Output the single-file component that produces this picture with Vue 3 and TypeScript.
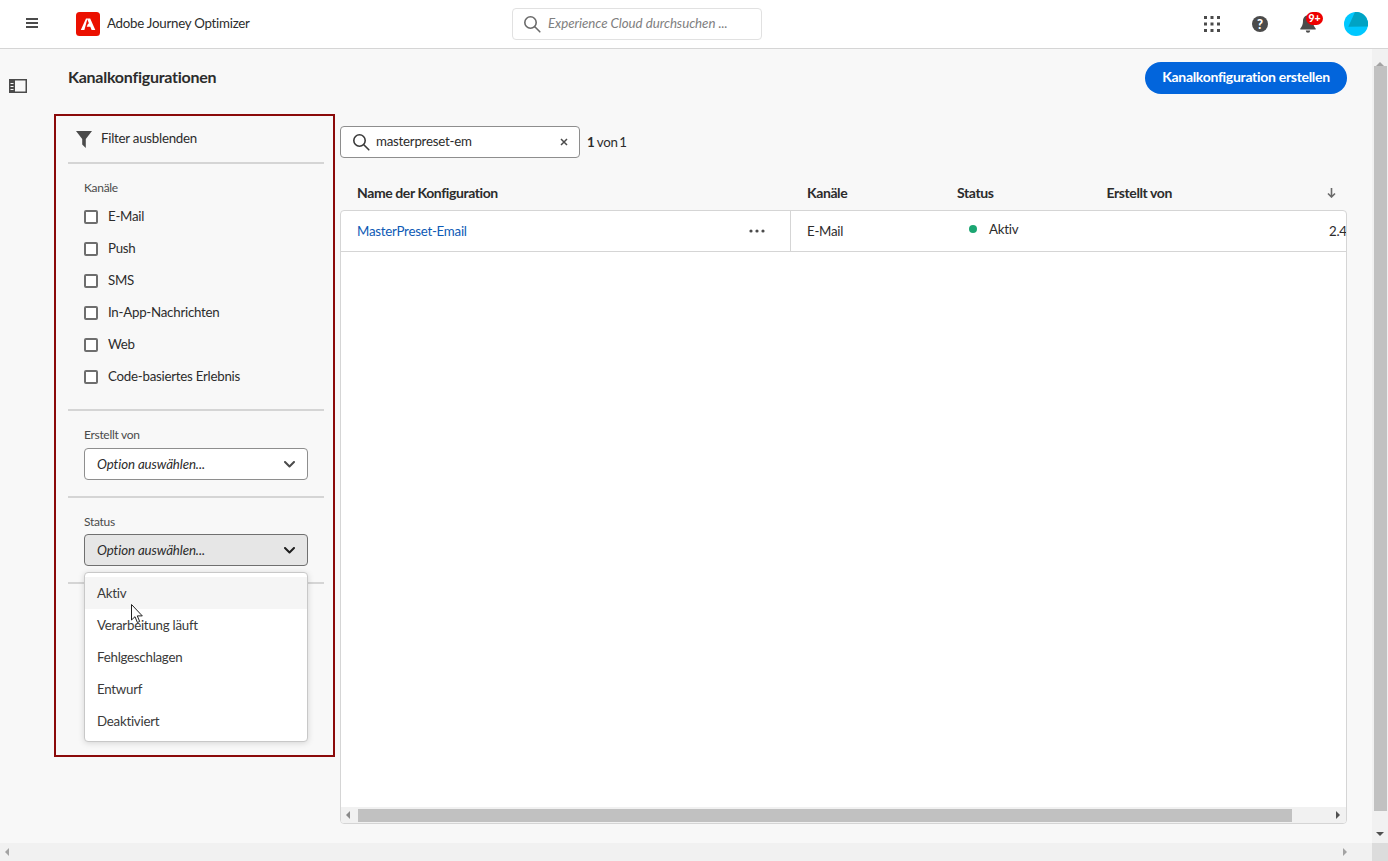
<script setup lang="ts">
const channels: string[] = ['E-Mail', 'Push', 'SMS', 'In-App-Nachrichten', 'Web', 'Code-basiertes Erlebnis']
const statuses: string[] = ['Aktiv', 'Verarbeitung läuft', 'Fehlgeschlagen', 'Entwurf', 'Deaktiviert']
</script>

<template>
  <div class="app">
    <header class="topbar">
      <svg class="burger" width="12" height="10" viewBox="0 0 12 10"><path d="M0 0h12v2H0zM0 4h12v2H0zM0 8h12v2H0z" fill="#4b4b4b" /></svg>
      <span class="logo">
        <svg width="24" height="24" viewBox="0 0 24 24"><rect width="24" height="24" rx="3.5" fill="#eb1000" /><path d="M10 6.500h4.200L19.300 18h-3.700l-1.300-3.300h-3.600l1.400-3.100 1 .1-1.800-4.400L8.400 18H4.800z" fill="#fff" /></svg>
      </span>
      <span class="product">Adobe Journey Optimizer</span>
      <div class="global-search">
        <svg width="18" height="18" viewBox="0 0 18 18" fill="none" stroke="#6a6a6a" stroke-width="1.6"><circle cx="7.5" cy="7.5" r="5.7" /><path d="M11.8 11.8l5 5" stroke-linecap="round" /></svg>
        <span>Experience Cloud durchsuchen ...</span>
      </div>
      <div class="top-actions">
        <svg class="grid-icon" width="16" height="16" viewBox="0 0 16 16" fill="#4b4b4b"><path d="M0 0h3v3H0zM6.500 0h3v3h-3zM13 0h3v3h-3zM0 6.500h3v3H0zM6.500 6.500h3v3h-3zM13 6.500h3v3h-3zM0 13h3v3H0zM6.500 13h3v3h-3zM13 13h3v3h-3z" /></svg>
        <span class="help">?</span>
        <span class="bell">
          <svg width="16" height="18" viewBox="0 0 16 18" fill="#4b4b4b"><path d="M8 0.500c-3 0-5 2-5 5.500 0 3.500-1 5.500-2.700 7.500v1h15.400v-1C14 11.500 13 9.500 13 6c0-3.500-2-5.500-5-5.500zM5.800 15.500a2.200 2.200 0 0 0 4.400 0z" /></svg>
          <b class="badge">9+</b>
        </span>
        <svg class="avatar" width="24" height="24" viewBox="0 0 24 24"><circle cx="12" cy="12" r="12" fill="#00c8ff" /><path d="M11 0A12 12 0 0 1 23.800 14.500L4.300 14.800z" fill="#00a3c4" /></svg>
      </div>
    </header>

    <div class="middle">
      <div class="viewport">
        <aside class="rail">
          <svg width="18" height="14" viewBox="0 0 18 14"><path d="M0 0h18v14H0z" fill="#4b4b4b" /><path d="M6 1.500h10.500v11H6z" fill="#f8f8f8" /><path d="M1.500 4h3v1h-3zM1.500 7h3v1h-3zM1.500 10h3v1h-3z" fill="#f8f8f8" /></svg>
        </aside>

        <main class="content">
          <div class="title-row">
            <h1>Kanalkonfigurationen</h1>
            <button class="cta">Kanalkonfiguration erstellen</button>
          </div>

          <div class="columns">
            <section class="filters">
              <div class="filter-head">
                <svg width="16" height="17" viewBox="0 0 16 17" fill="#4b4b4b"><path d="M0 0h16L9.800 8v9L6.200 13.500V8z" /></svg>
                <span>Filter ausblenden</span>
              </div>

              <div class="group channels">
                <div class="label">Kanäle</div>
                <label v-for="c in channels" :key="c" class="check"><i></i><span>{{ c }}</span></label>
              </div>

              <div class="group by">
                <div class="label">Erstellt von</div>
                <div class="select">
                  <em>Option auswählen...</em>
                  <svg width="11" height="7" viewBox="0 0 11 7" fill="none" stroke="#4b4b4b" stroke-width="2" stroke-linecap="round" stroke-linejoin="round"><path d="M1 1l4.500 4.500L10 1" /></svg>
                </div>
              </div>

              <div class="group status">
                <div class="label">Status</div>
                <div class="select open">
                  <em>Option auswählen...</em>
                  <svg width="11" height="7" viewBox="0 0 11 7" fill="none" stroke="#1f1f1f" stroke-width="2" stroke-linecap="round" stroke-linejoin="round"><path d="M1 1l4.500 4.500L10 1" /></svg>
                </div>
              </div>

              <ul class="menu">
                <li v-for="(s, i) in statuses" :key="s" :class="{ hover: i === 0 }">{{ s }}</li>
              </ul>
              <svg class="cursor" width="13" height="20" viewBox="0 0 13 20"><path d="M0.500 0.500v15.500l3.500-3.300 2.400 5.800 2.300-1-2.400-5.600h5z" fill="#fff" stroke="#222" stroke-width="1" /></svg>
            </section>

            <section class="results">
              <div class="search-row">
                <div class="search">
                  <svg width="18" height="18" viewBox="0 0 18 18" fill="none" stroke="#3a3a3a" stroke-width="1.6"><circle cx="7.500" cy="7.500" r="5.700" /><path d="M11.800 11.800l5 5" stroke-linecap="round" /></svg>
                  <span>masterpreset-em</span>
                  <svg class="x" width="8" height="8" viewBox="0 0 8 8" stroke="#4b4b4b" stroke-width="1.500"><path d="M1 1l6 6M7 1l-6 6" /></svg>
                </div>
                <span class="count"><b>1</b> von 1</span>
              </div>

              <div class="thead">
                <span>Name der Konfiguration</span>
                <span>Kanäle</span>
                <span>Status</span>
                <span>Erstellt von</span>
                <svg width="9" height="10" viewBox="0 0 9 10" fill="none" stroke="#6a6a6a" stroke-width="1.600"><path d="M4.500 0v9M1 5.500l3.500 3.500L8 5.500" /></svg>
              </div>

              <div class="table">
                <div class="trow">
                  <div class="cell name">
                    <a>MasterPreset-Email</a>
                    <svg width="16" height="4" viewBox="0 0 16 4" fill="#4b4b4b"><circle cx="2" cy="2" r="1.600" /><circle cx="8" cy="2" r="1.600" /><circle cx="14" cy="2" r="1.600" /></svg>
                  </div>
                  <div class="cell chan">E-Mail</div>
                  <div class="cell stat"><i></i>Aktiv</div>
                  <div class="cell by-cell"></div>
                  <div class="cell date">2.4</div>
                </div>
                <div class="tbody"></div>
                <div class="h-bar">
                  <span class="arrow left"></span>
                  <span class="thumb"></span>
                  <span class="arrow right"></span>
                </div>
              </div>
            </section>
          </div>
        </main>
      </div>

      <div class="v-bar">
        <span class="v-up"></span>
        <span class="v-thumb"></span>
        <span class="v-down"></span>
      </div>
    </div>

    <div class="page-h">
      <span class="arrow left faint"></span>
      <span class="arrow right faint"></span>
      <span class="corner"></span>
    </div>
  </div>
</template>

<style>
html, body { margin: 0; background: #f8f8f8; }
</style>

<style scoped>
.app { width: 1388px; height: 861px; display: flex; flex-direction: column; overflow: hidden; font-family: Lato, "Noto Sans", sans-serif; font-size: 13.3px; letter-spacing: -0.25px; color: #2c2c2c; background: #f8f8f8; }
.topbar { height: 48px; flex: none; box-sizing: content-box; background: #fff; border-bottom: 1px solid #d5d5d5; display: flex; align-items: center; padding-left: 26px; padding-right: 20px; }
.burger { margin-right: 38px; margin-top: -2px; }
.logo { width: 24px; height: 24px; display: block; }
.logo svg { display: block; }
.product { margin-left: 7px; color: #2c2c2c; width: 405px; white-space: nowrap; margin-bottom: 2px; }
.global-search { width: 250px; height: 32px; box-sizing: border-box; background: #fff; border: 1px solid #e1e1e1; border-radius: 4px; display: flex; align-items: center; gap: 7px; padding-left: 10px; font-style: italic; color: #808080; letter-spacing: -0.05px; white-space: nowrap; }
.global-search span { margin-bottom: 2px; }
.top-actions { margin-left: auto; display: flex; align-items: center; }
.grid-icon { margin-right: 32px; }
.help { width: 16px; height: 16px; border-radius: 50%; background: #4b4b4b; color: #fff; font-size: 13px; font-weight: 900; display: flex; align-items: center; justify-content: center; margin-right: 32px; }
.bell { position: relative; width: 16px; height: 18px; margin-right: 28px; }
.bell svg { display: block; }
.badge { position: absolute; left: 6px; top: -3px; width: 17px; height: 13px; border-radius: 7px; background: #e00; color: #fff; font-size: 10.500px; font-weight: 900; line-height: 13px; text-align: center; letter-spacing: 0; }

.middle { flex: 1; min-height: 0; display: flex; }
.viewport { flex: 1; min-width: 0; display: flex; background: #f8f8f8; }
.rail { width: 54px; flex: none; padding: 30px 0 0 9px; box-sizing: border-box; }
.rail svg { display: block; }
.content { flex: 1; min-width: 0; display: flex; flex-direction: column; padding-right: 25px; }
.title-row { height: 65px; flex: none; display: flex; align-items: flex-start; justify-content: space-between; padding-left: 14px; padding-top: 13px; box-sizing: border-box; }
h1 { margin: 5px 0 0; font-size: 16px; line-height: 20px; font-weight: 700; color: #2c2c2c; }
.cta { width: 202px; height: 32px; border: 0; border-radius: 16px; background: #0265dc; color: #fff; font-family: inherit; font-size: 14px; letter-spacing: -0.3px; font-weight: 700; padding: 0 0 4px; }
.columns { flex: 1; min-height: 0; display: flex; gap: 5px; }

.filters { position: relative; width: 281px; height: 643px; flex: none; box-sizing: border-box; border: 2px solid #8b0a0a; padding: 0 9px 0 12px; }
.filter-head { height: 48px; box-sizing: border-box; display: flex; align-items: center; gap: 9px; padding-left: 8px; border-bottom: 2px solid #d5d5d5; }
.filter-head svg { flex: none; }
.filter-head span { margin-bottom: 2px; }
.group { border-bottom: 2px solid #d5d5d5; padding-left: 16px; padding-right: 16px; }
.label { font-size: 12px; line-height: 16px; color: #4b4b4b; letter-spacing: -0.3px; }
.channels { height: 247px; box-sizing: border-box; padding-top: 16px; }
.channels .label { margin-bottom: 5px; }
.check { display: flex; align-items: center; height: 32px; gap: 10px; }
.check span { margin-bottom: 2px; }
.check i { width: 14px; height: 14px; box-sizing: border-box; border: 2px solid #6e6e6e; border-radius: 2px; background: #fff; }
.by { height: 87px; box-sizing: border-box; padding-top: 16px; }
.by .label { margin-bottom: 5px; }
.status { height: 86px; box-sizing: border-box; padding-top: 16px; }
.status .label { margin-bottom: 4px; }
.select { height: 32px; box-sizing: border-box; border: 1px solid #8e8e8e; border-radius: 4px; background: #fff; display: flex; align-items: center; justify-content: space-between; padding: 0 12px; }
.select em { color: #2c2c2c; letter-spacing: -0.1px; }
.select.open { background: #e6e6e6; border-color: #707070; }
.menu { position: absolute; left: 28px; top: 456px; width: 224px; height: 170px; box-sizing: border-box; margin: 0; padding: 4px 0; list-style: none; background: #fff; border: 1px solid #c8c8c8; border-radius: 4px; box-shadow: 0 1px 6px rgba(0, 0, 0, 0.15); }
.menu li { height: 32px; line-height: 33px; padding-left: 12px; color: #3a3a3a; }
.menu li.hover { background: #f5f5f5; }
.cursor { position: absolute; left: 75px; top: 488px; }

.results { flex: 1; min-width: 0; display: flex; flex-direction: column; }
.search-row { height: 64px; flex: none; box-sizing: border-box; padding-top: 12px; display: flex; align-items: flex-start; gap: 7px; }
.search { width: 240px; height: 32px; box-sizing: border-box; border: 1px solid #8e8e8e; border-radius: 4px; background: #fff; display: flex; align-items: center; padding: 0 11px; gap: 6px; color: #2c2c2c; }
.search svg { flex: none; }
.search span { margin-bottom: 3px; }
.search .x { margin-left: auto; }
.count { line-height: 32px; color: #2c2c2c; word-spacing: -1.500px; }
.count b { font-weight: 700; margin-right: 1px; }
.thead { height: 32px; flex: none; box-sizing: border-box; display: grid; grid-template-columns: 450px 150px 149.500px 220px 9px; align-items: center; padding: 0 0 4px 17px; font-size: 14px; letter-spacing: -0.4px; font-weight: 700; color: #2c2c2c; }
.thead svg { display: block; margin-top: 2px; }
.table { height: 614px; flex: none; box-sizing: border-box; background: #fff; border: 1px solid #d5d5d5; border-radius: 4px; display: flex; flex-direction: column; overflow: hidden; }
.trow { height: 41px; flex: none; box-sizing: border-box; border-bottom: 1px solid #d5d5d5; display: grid; grid-template-columns: 450px 166px 150px 193px 46px; }
.cell { display: flex; align-items: center; white-space: nowrap; box-sizing: border-box; }
.name { justify-content: space-between; padding: 0 25px 0 16px; border-right: 1px solid #d5d5d5; }
.name a { color: #0d5ab5; }
.chan { padding-left: 16px; }
.stat { padding: 0 0 4px 12px; gap: 12px; }
.stat i { width: 8px; height: 8px; border-radius: 50%; background: #1ba672; }
.date { padding-left: 29px; overflow: hidden; }
.tbody { flex: 1; }
.h-bar { height: 16px; flex: none; background: #f1f1f1; display: flex; align-items: center; padding: 0 6px 0 5px; position: relative; }
.thumb { width: 934px; height: 13px; background: #c1c1c1; margin-left: 8px; }
.h-bar .right { margin-left: auto; }
.arrow { width: 0; height: 0; border-top: 4px solid transparent; border-bottom: 4px solid transparent; display: block; }
.arrow.left { border-right: 4px solid #8a8a8a; }
.arrow.right { border-left: 4px solid #505050; }
.arrow.faint.left { border-right-color: #a3a3a3; }
.arrow.faint.right { border-left-color: #a3a3a3; }

.v-bar { width: 16px; flex: none; background: #f1f1f1; display: flex; flex-direction: column; align-items: center; padding: 13px 0 7px; box-sizing: border-box; }
.v-up { width: 0; height: 0; border-left: 4px solid transparent; border-right: 4px solid transparent; border-bottom: 4px solid #a3a3a3; }
.v-thumb { width: 13px; height: 745px; background: #c1c1c1; }
.v-down { width: 0; height: 0; border-left: 4px solid transparent; border-right: 4px solid transparent; border-top: 4px solid #505050; margin-top: auto; }
.page-h { height: 18px; flex: none; background: #f1f1f1; display: flex; align-items: center; padding-left: 5px; }
.page-h .right { margin-left: auto; margin-right: 25px; }
.corner { width: 16px; height: 18px; background: #dcdcdc; }
</style>
